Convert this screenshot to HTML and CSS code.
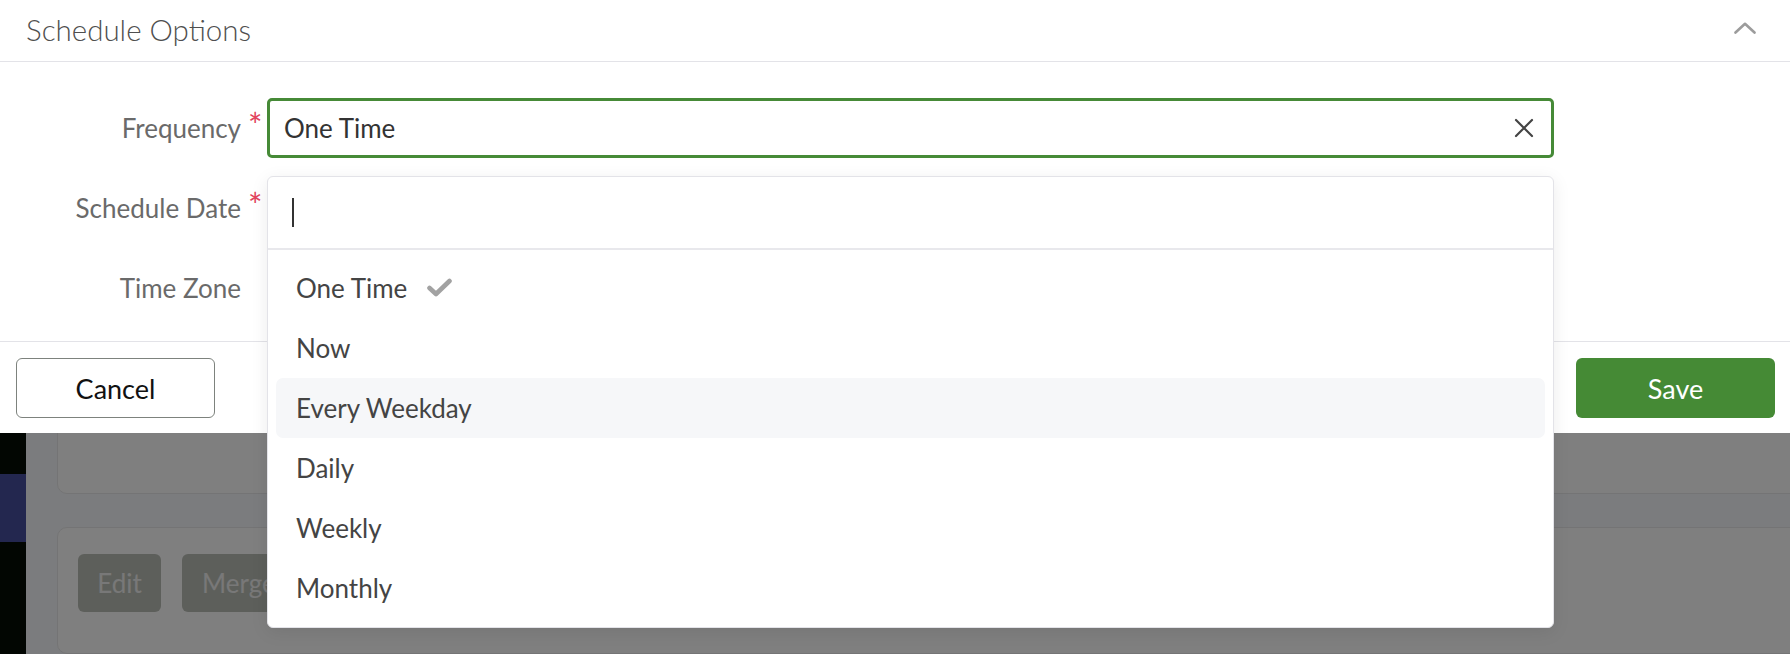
FILE: index.html
```html
<!DOCTYPE html>
<html>
<head>
<meta charset="utf-8">
<link rel="stylesheet" href="styles.css">
</head>
<body>
<div class="page">
  <aside class="sidebar"><div class="sidebar-item"></div></aside>
  <main class="main">
    <section class="card card-top"></section>
    <section class="card card-actions">
      <div class="btn-muted">Edit</div>
      <div class="btn-muted wide">Merge</div>
    </section>
  </main>
</div>
<div class="overlay"></div>
<div class="modal">
  <header class="modal-header">
    <span class="modal-title">Schedule Options</span>
    <svg class="chevron" width="22" height="12" viewBox="0 0 22 12"><polyline points="1.5,10.5 11,1.8 20.5,10.5" fill="none" stroke="#9c9c9c" stroke-width="2.6" stroke-linecap="round" stroke-linejoin="round"/></svg>
  </header>
  <div class="modal-body">
    <label class="label">Frequency</label>
    <span class="star">*</span>
    <div class="field focus">
      <span class="value">One Time</span>
      <svg class="clear" width="20" height="20" viewBox="0 0 20 20"><path d="M2 2 L18 18 M18 2 L2 18" stroke="#444" stroke-width="2.2" stroke-linecap="round"/></svg>
      <div class="dropdown">
        <div class="search"><span class="caret"></span></div>
        <ul class="options">
          <li class="option">One Time <svg class="check" width="25" height="19" viewBox="0 0 25 19"><polyline points="2.5,10 9,16 22.5,3" fill="none" stroke="#a2a2a2" stroke-width="4.6" stroke-linecap="round" stroke-linejoin="round"/></svg></li>
          <li class="option">Now</li>
          <li class="option hover">Every Weekday</li>
          <li class="option">Daily</li>
          <li class="option">Weekly</li>
          <li class="option">Monthly</li>
        </ul>
      </div>
    </div>

    <label class="label">Schedule Date</label>
    <span class="star">*</span>
    <div class="field"></div>

    <label class="label">Time Zone</label>
    <span class="star"></span>
    <div class="field"></div>
  </div>
  <footer class="modal-footer">
    <button class="btn btn-cancel">Cancel</button>
    <button class="btn btn-save">Save</button>
  </footer>
</div>
</body>
</html>
```

FILE: styles.css
```css
* { box-sizing: border-box; }
html, body { margin: 0; padding: 0; }
body {
  width: 1790px;
  height: 654px;
  overflow: hidden;
  position: relative;
  background: #f6f8fc;
  font-family: Lato, "Liberation Sans", sans-serif;
}

/* background page */
.page { display: flex; height: 654px; }
.sidebar {
  width: 26px;
  background: #050d05;
  display: flex;
  flex-direction: column;
  padding-top: 474px;
}
.sidebar-item { height: 68px; background: #474f9f; }
.main {
  flex: 1;
  padding: 300px 0 0 31px;
  margin-right: -20px;
  display: flex;
  flex-direction: column;
  gap: 33px;
}
.card {
  background: #ffffff;
  border: 1px solid #e9e9ea;
  border-radius: 10px;
}
.card-top { height: 194px; }
.card-actions {
  flex: 1;
  display: flex;
  align-items: flex-start;
  gap: 21px;
  padding: 26px 20px;
}
.btn-muted {
  width: 83px;
  height: 58px;
  border-radius: 6px;
  background: #bbbfb7;
  color: #f0f0f0;
  font-size: 26px;
  display: flex;
  align-items: center;
  justify-content: center;
}
.btn-muted.wide { width: auto; padding: 0 20px; justify-content: flex-start; }

.overlay { position: absolute; inset: 0; background: rgba(0, 0, 0, 0.5); }

/* modal */
.modal {
  position: absolute;
  top: 0;
  left: 0;
  right: 0;
  background: #ffffff;
}
.modal-header {
  height: 62px;
  border-bottom: 1px solid #e3e3e8;
  display: flex;
  align-items: center;
  justify-content: space-between;
  padding: 0 34px 2px 26px;
}
.modal-title { font-size: 29.5px; font-weight: 300; color: #4f4f4f; }
.chevron { display: block; margin-top: -4px; }

.modal-body {
  display: grid;
  grid-template-columns: 241px 26px 1fr;
  grid-auto-rows: 60px;
  row-gap: 20px;
  padding: 36px 236px 23px 0;
  border-bottom: 1px solid #e3e3e8;
}
.label {
  align-self: center;
  text-align: right;
  font-size: 26px;
  color: #6a6a6a;
}
.star {
  color: #e2445e;
  font-size: 34px;
  line-height: 1;
  padding: 10px 0 0 7px;
}
.field {
  position: relative;
  border: 1px solid #dcdce0;
  border-radius: 5px;
}
.field.focus {
  border: 3px solid #468a37;
  display: flex;
  align-items: center;
  justify-content: space-between;
  padding: 0 17px 0 14px;
}
.value { font-size: 26px; color: #333333; }
.clear { display: block; }

.dropdown {
  position: absolute;
  top: calc(100% + 21px);
  left: -3px;
  right: -3px;
  background: #ffffff;
  border: 1px solid #e3e3e8;
  border-radius: 6px;
  box-shadow: 0 4px 18px rgba(0, 0, 0, 0.08);
  z-index: 2;
}
.search {
  height: 73px;
  border-bottom: 2px solid #e8e8ec;
  display: flex;
  align-items: center;
  padding-left: 24px;
}
.caret { width: 2px; height: 29px; background: #333; }
.options {
  list-style: none;
  margin: 0;
  padding: 8px 8px 9px;
}
.option {
  height: 60px;
  display: flex;
  align-items: center;
  gap: 20px;
  padding-left: 20px;
  border-radius: 7px;
  font-size: 26px;
  color: #444444;
}
.option.hover { background: #f6f7f9; }
.check { display: block; margin-top: -2px; }

.modal-footer {
  display: flex;
  justify-content: space-between;
  padding: 16px 15px 15px 16px;
}
.btn {
  width: 199px;
  height: 60px;
  border-radius: 6px;
  font-family: Lato, "Liberation Sans", sans-serif;
  font-size: 27px;
}
.btn-cancel { background: #ffffff; border: 1.5px solid #7d827d; color: #111111; }
.btn-save { background: #458a35; border: none; color: #ffffff; }
```
